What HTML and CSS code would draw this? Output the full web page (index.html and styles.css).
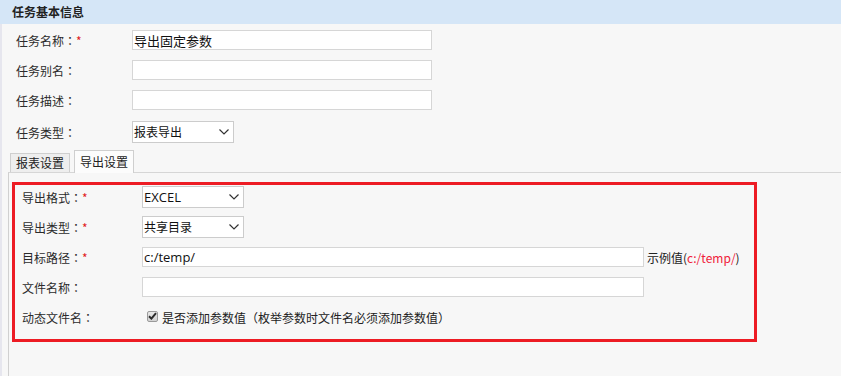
FILE: index.html
```html
<!DOCTYPE html>
<html lang="zh-CN">
<head>
<meta charset="utf-8">
<title>任务基本信息</title>
<link rel="stylesheet" href="styles.css">
</head>
<body>
<div class="header">任务基本信息</div>
<div class="main">
  <div class="basic">
    <div class="row">
      <span class="lbl">任务名称<span class="p">：</span><span class="req">*</span></span>
      <input class="txt w300" type="text" value="导出固定参数">
    </div>
    <div class="row">
      <span class="lbl">任务别名<span class="p">：</span></span>
      <input class="txt w300" type="text" value="">
    </div>
    <div class="row">
      <span class="lbl">任务描述<span class="p">：</span></span>
      <input class="txt w300" type="text" value="">
    </div>
    <div class="row row-sel">
      <span class="lbl">任务类型<span class="p">：</span></span>
      <span class="sel">报表导出<svg class="chev" width="10" height="6" viewBox="0 0 10 6"><path d="M0.5 0.5 L5 5 L9.5 0.5" fill="none" stroke="#333" stroke-width="1.2"/></svg></span>
    </div>
  </div>
  <div class="tabs">
    <div class="tab">报表设置</div>
    <div class="tab active">导出设置</div>
  </div>
  <div class="panel">
    <div class="redbox">
      <div class="prow">
        <span class="plbl">导出格式<span class="p">：</span><span class="req">*</span></span>
        <span class="sel latin">EXCEL<svg class="chev" width="10" height="6" viewBox="0 0 10 6"><path d="M0.5 0.5 L5 5 L9.5 0.5" fill="none" stroke="#333" stroke-width="1.2"/></svg></span>
      </div>
      <div class="prow">
        <span class="plbl">导出类型<span class="p">：</span><span class="req">*</span></span>
        <span class="sel">共享目录<svg class="chev" width="10" height="6" viewBox="0 0 10 6"><path d="M0.5 0.5 L5 5 L9.5 0.5" fill="none" stroke="#333" stroke-width="1.2"/></svg></span>
      </div>
      <div class="prow">
        <span class="plbl">目标路径<span class="p">：</span><span class="req">*</span></span>
        <input class="txt w502" type="text" value="c:/temp/">
        <span class="hint">示例值(<span class="red">c:/temp/</span>)</span>
      </div>
      <div class="prow">
        <span class="plbl">文件名称<span class="p">：</span></span>
        <input class="txt w502" type="text" value="">
      </div>
      <div class="prow">
        <span class="plbl">动态文件名<span class="p">：</span></span>
        <span class="cb"><svg width="9" height="8" viewBox="0 0 9 8"><path d="M1 4.2 L3.4 6.6 L8 1.2" fill="none" stroke="#2b2b2b" stroke-width="2"/></svg></span>
        <span class="cbtext">是否添加参数值<span class="p">（</span>枚举参数时文件名必须添加参数值<span class="p">）</span></span>
      </div>
    </div>
  </div>
</div>
</body>
</html>
```
FILE: styles.css
```css
* { box-sizing: border-box; }
html, body { margin: 0; padding: 0; }
body {
  background: #f7f7f7;
  font-family: "Noto Sans CJK SC", sans-serif;
  font-size: 12px;
  color: #333;
  height: 376px;
  overflow: hidden;
}
.p {
  font-family: "Noto Sans CJK TC", "Noto Sans CJK SC", sans-serif;
  font-feature-settings: "locl" 0;
}
.header {
  height: 24px;
  line-height: 24px;
  background: #d5e6f7;
  padding-left: 12px;
  font-weight: bold;
  color: #222;
}
.main {
  border-left: 2px solid #e6e6ee;
  height: 352px;
  display: flex;
  flex-direction: column;
}
.basic {
  padding-top: 1px;
  padding-left: 14px;
}
.row {
  height: 30px;
  display: flex;
  align-items: center;
}
.row-sel { height: 34px; }
.lbl {
  width: 116px;
  flex: none;
  color: #2b2b2b;
}
.req { color: #e02020; }
.txt {
  height: 20px;
  border: 1px solid #d6d6d6;
  background: #fff;
  padding: 0 0 0 1px;
  margin: 0;
  font-family: "Open Sans", "Noto Sans CJK SC", sans-serif;
  font-size: 13px;
  color: #111;
  outline: none;
}
.w300 { width: 300px; }
.w502 { width: 502px; }
.sel {
  position: relative;
  width: 102px;
  height: 22px;
  line-height: 20px;
  border: 1px solid #cccccc;
  background: #fff;
  padding-left: 1px;
  color: #111;
  flex: none;
}
.sel.latin {
  font-family: "Open Sans", "Noto Sans CJK SC", sans-serif;
  font-size: 13px;
}
.chev {
  position: absolute;
  right: 4px;
  top: 7px;
}
.tabs {
  height: 23px;
  display: flex;
  align-items: flex-end;
  gap: 4px;
  padding-left: 8px;
}
.tab {
  width: 60px;
  height: 19px;
  line-height: 17px;
  border: 1px solid #cfcfcf;
  border-bottom: none;
  background: #eeeeee;
  padding-left: 5px;
  color: #222;
}
.tab.active {
  width: 60px;
  height: 23px;
  line-height: 21px;
  background: #fcfcfc;
  margin-bottom: -1px;
  position: relative;
  z-index: 1;
}
.panel {
  flex: 1;
  margin-left: 6px;
  border-top: 1px solid #d6d6d6;
  border-left: 1px solid #d0d0d0;
  padding-top: 9px;
  padding-left: 3px;
}
.redbox {
  width: 745px;
  border: 3px solid #ed1c24;
  padding: 1px 0 11px 7px;
  display: flex;
  flex-direction: column;
  gap: 8px;
}
.prow {
  height: 22px;
  display: flex;
  align-items: center;
}
.plbl {
  width: 120px;
  flex: none;
  color: #2b2b2b;
}
.hint {
  margin-left: 3px;
  color: #222;
}
.red { color: #f0203a; }
.cb {
  width: 11px;
  height: 11px;
  margin-left: 5px;
  margin-top: -2px;
  border: 1px solid #9a9a9a;
  border-radius: 2px;
  background: linear-gradient(#e8e8e8, #d2d2d2);
  display: flex;
  align-items: center;
  justify-content: center;
  flex: none;
}
.cbtext {
  margin-left: 4px;
  color: #222;
}
```
